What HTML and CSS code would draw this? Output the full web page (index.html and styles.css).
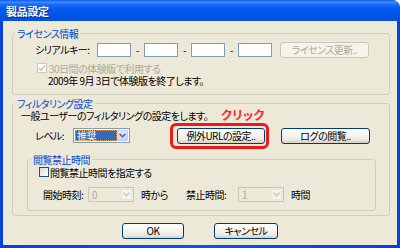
FILE: index.html
```html
<!DOCTYPE html>
<html lang="ja">
<head>
<meta charset="utf-8">
<title>製品設定</title>
<link rel="stylesheet" href="styles.css">
</head>
<body>
<div class="window">
  <div class="titlebar"><span class="title">製品設定</span></div>
  <div class="body">
    <div class="group g1">
      <div class="legend">ライセンス情報</div>
      <div class="row serial">
        <span class="lbl-serial">シリアルキー:</span>
        <span class="input"></span><span class="dash">-</span>
        <span class="input"></span><span class="dash">-</span>
        <span class="input"></span><span class="dash">-</span>
        <span class="input"></span>
        <span class="btn disabled btn-license">ライセンス更新..</span>
      </div>
      <div class="row trial muted">
        <span class="checkbox dis"><svg width="8" height="8" viewBox="0 0 8 8"><path d="M1 4 L3 6 L7 1.5" fill="none" stroke="#c4c2b4" stroke-width="1.6"/></svg></span>
        <span>30日間の体験版で利用する</span>
      </div>
      <div class="row date">2009年 9月 3日で体験版を終了します。</div>
    </div>

    <div class="group g2">
      <div class="legend">フィルタリング設定</div>
      <div class="row desc">一般ユーザーのフィルタリングの設定をします。</div>
      <div class="row level">
        <span class="lbl-level">レベル:</span>
        <span class="select sel-level">
          <span class="sel-value hl">推奨</span>
          <span class="sel-arrow"><svg width="7" height="5" viewBox="0 0 7 5"><path d="M0.5 0.8 L3.5 3.8 L6.5 0.8" fill="none" stroke="#4d6185" stroke-width="1.5"/></svg></span>
        </span>
        <span class="callout">
          <span class="btn btn-url">例外URLの設定..</span>
          <span class="click">クリック</span>
        </span>
        <span class="btn btn-log">ログの閲覧..</span>
      </div>

      <div class="group g3">
        <div class="legend">閲覧禁止時間</div>
        <div class="row block">
          <span class="checkbox"></span>
          <span>閲覧禁止時間を指定する</span>
        </div>
        <div class="row times">
          <span class="lbl-start">開始時刻:</span>
          <span class="select dis sel-time">
            <span class="sel-value">0</span>
            <span class="sel-arrow"><svg width="7" height="5" viewBox="0 0 7 5"><path d="M0.5 0.8 L3.5 3.8 L6.5 0.8" fill="none" stroke="#c9c7ba" stroke-width="1.3"/></svg></span>
          </span>
          <span class="from">時から</span>
          <span class="lbl-dur">禁止時間:</span>
          <span class="select dis sel-time">
            <span class="sel-value">1</span>
            <span class="sel-arrow"><svg width="7" height="5" viewBox="0 0 7 5"><path d="M0.5 0.8 L3.5 3.8 L6.5 0.8" fill="none" stroke="#c9c7ba" stroke-width="1.3"/></svg></span>
          </span>
          <span class="hours">時間</span>
        </div>
      </div>
    </div>

    <div class="actions">
      <span class="btn btn-ok">OK</span>
      <span class="btn btn-cancel">キャンセル</span>
    </div>
  </div>
</div>
</body>
</html>
```

FILE: styles.css
```css
* { box-sizing: border-box; margin: 0; padding: 0; }
html, body { width: 400px; height: 248px; overflow: hidden; }
body {
  margin: 0;
  background: #ffffff;
  font-family: "Noto Sans CJK JP", "Noto Sans", sans-serif;
  font-size: 10px;
  line-height: 11px;
  letter-spacing: -0.5px;
  font-feature-settings: "palt";
  color: #000;
}
.window {
  width: 400px;
  height: 248px;
  display: flex;
  flex-direction: column;
  background: linear-gradient(90deg, #0a3fd8, #1650e8 50%, #0a3fd8);
  border-radius: 0 8px 0 0;
  overflow: hidden;
}
.titlebar {
  height: 21px;
  flex: none;
  display: flex;
  align-items: center;
  padding: 2px 0 0 6px;
  background: linear-gradient(#0a5cf0 0%, #3b8cff 10%, #1a6af8 22%, #0058ee 45%, #0054e6 75%, #0350dc 100%);
}
.title {
  color: #fff;
  font-weight: bold;
  font-size: 11px;
  letter-spacing: -0.3px;
  line-height: 13px;
  text-shadow: 1px 1px 0 #0b2a8a;
}
.body {
  flex: 1;
  margin: 0 3px 3px;
  background: #ece9d8;
  padding: 12px 7px 0 9px;
  display: flex;
  flex-direction: column;
}
.group {
  border: 1px solid #d0d0bf;
  border-radius: 3px;
}
.legend {
  width: fit-content;
  height: 13px;
  line-height: 13px;
  margin: -7px 0 0 2px;
  padding: 0 2px;
  background: #ece9d8;
  color: #0046d5;
}
.row { display: flex; align-items: center; white-space: nowrap; }
.muted { color: #aca899; }

/* group 1 */
.g1 { padding-bottom: 7px; }
.serial { margin-top: 2px; height: 15px; padding-left: 22px; }
.lbl-serial { width: 62px; }
.input {
  width: 34px;
  height: 14px;
  border: 1px solid #7f9db9;
  background: #fff;
}
.dash { width: 13px; text-align: center; }
.btn {
  display: flex;
  align-items: center;
  justify-content: center;
  height: 16px;
  line-height: 12px;
  border: 1px solid #003c74;
  border-radius: 3px;
  background: linear-gradient(#ffffff, #f5f4ef 45%, #ecebe4 75%, #d6d0c5);
  color: #000;
}
.btn.disabled {
  border-color: #c9c7ba;
  background: #f5f4ea;
  color: #aca899;
}
.btn-license { width: 89px; height: 16px; margin-left: 8px; }
.trial { margin-top: 5px; height: 12px; padding-left: 24px; }
.checkbox {
  width: 10px;
  height: 10px;
  border: 1px solid #1c5180;
  background: linear-gradient(135deg, #dcdcd7, #fff);
  margin-right: 2px;
  display: flex;
  align-items: center;
  justify-content: center;
}
.checkbox.dis { border-color: #cac8bb; background: #fff; }
.date { height: 13px; padding-left: 35px; }

/* group 2 */
.g2 { margin-top: 8px; padding-bottom: 4px; }
.desc { height: 11px; padding-left: 8px; }
.level { margin-top: 6px; height: 17px; padding-left: 22px; }
.lbl-level { width: 38px; }
.select {
  display: flex;
  align-items: stretch;
  height: 15px;
  border: 1px solid #7f9db9;
  background: #fff;
  padding: 1px;
}
.sel-level { width: 57px; }
.sel-value {
  flex: 1;
  display: flex;
  align-items: center;
  padding-left: 2px;
}
.sel-value.hl {
  background: #316ac5;
  color: #fff;
  outline: 1px dotted #e8a040;
  outline-offset: -1px;
}
.sel-arrow {
  width: 11px;
  display: flex;
  align-items: center;
  justify-content: center;
  border: 1px solid #b9d1fa;
  border-radius: 1px;
  background: linear-gradient(#e1eafe, #c3d3fd);
}
.select.dis { border-color: #c9c7ba; background: #ece9d8; color: #aca899; }
.select.dis .sel-arrow { border-color: #e8e6de; background: #f4f3ee; }
.callout { position: relative; margin-left: 47px; display: flex; }
.callout::after {
  content: "";
  position: absolute;
  top: -5px; bottom: -5px; left: -7px; right: -4px;
  border: 3px solid #f01818;
  border-radius: 6px;
}
.click {
  position: absolute;
  left: 44px;
  top: -20px;
  color: #ff2424;
  font-weight: bold;
  font-size: 12px;
  letter-spacing: 0.5px;
  line-height: 13px;
  white-space: nowrap;
}
.btn-url { width: 88px; }
.btn-log { width: 89px; margin-left: 16px; }

/* group 3 */
.g3 { margin: 15px 13px 0 14px; padding-bottom: 8px; }
.g3 .legend { margin-left: 3px; }
.block { height: 12px; padding-left: 11px; }
.block .checkbox { margin-right: 1px; }
.times { margin-top: 9px; height: 15px; padding-left: 15px; }
.lbl-start { width: 45px; }
.sel-time { width: 46px; }
.from { margin-left: 7px; width: 45px; }
.lbl-dur { width: 52px; }
.hours { margin-left: 7px; }

/* actions */
.actions {
  margin-top: 7px;
  display: flex;
  justify-content: center;
  gap: 30px;
  padding-right: 2px;
}
.btn-ok { width: 62px; }
.btn-cancel { width: 64px; }
```
